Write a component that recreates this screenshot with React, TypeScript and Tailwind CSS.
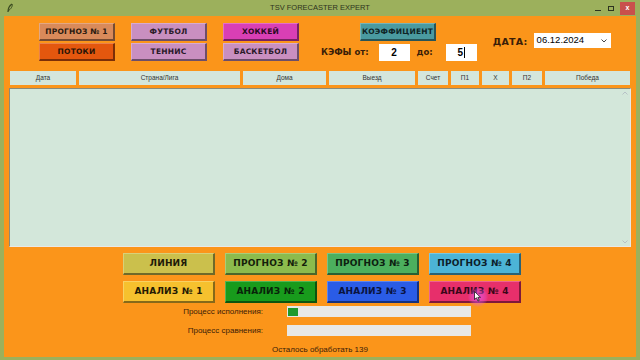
import React from "react";

const btnFont = { fontFamily: '"DejaVu Sans", sans-serif' };

function Btn({ label, cls, w = "w-[76px]", h = "h-[18px]", text = "text-[7.5px]" }: { label: string; cls: string; w?: string; h?: string; text?: string }) {
  return (
    <div
      className={`${w} ${h} ${cls} ${text} flex items-center justify-center font-bold tracking-[0.2px] border-t border-l border-t-white/25 border-l-white/25 border-b-2 border-r-2 border-b-black/45 border-r-black/45`}
      style={btnFont}
    >
      {label}
    </div>
  );
}

const cols: [string, string][] = [
  ["Дата", "w-[66px]"],
  ["Страна/Лига", "w-[161px]"],
  ["Дома", "w-[83px]"],
  ["Выезд", "w-[86px]"],
  ["Счет", "w-[30px]"],
  ["П1", "w-[28px]"],
  ["X", "w-[27px]"],
  ["П2", "w-[30px]"],
  ["Победа", "w-[85px]"],
];

export default function App() {
  return (
    <div className="w-[640px] h-[360px] bg-[#9cb05c] flex flex-col overflow-hidden" style={{ fontFamily: '"Liberation Sans", sans-serif' }}>
      {/* title bar */}
      <div className="h-[16px] flex items-center relative shrink-0">
        <svg width="8" height="10" viewBox="0 0 8 10" className="ml-[6px]">
          <path d="M6 1 C3 3 2 6 2 9" stroke="#3a4a20" strokeWidth="1.3" fill="none" />
          <path d="M6 1 C7 3 5 6 2 8" stroke="#3a4a20" strokeWidth="1" fill="none" />
        </svg>
        <div className="absolute left-0 right-0 top-0 h-[16px] flex items-center justify-center text-[7.5px] text-[#2d3320]" style={{ fontFamily: '"Liberation Sans Narrow", "Liberation Sans", sans-serif' }}>
          TSV FORECASTER EXPERT
        </div>
        <div className="ml-auto flex items-center h-[16px]">
          <div className="w-[6px] h-[1px] bg-[#2d3320] mt-[4px] mr-[7px]" />
          <div className="w-[6px] h-[5px] border border-[#2d3320] mr-[6px]" />
          <div className="w-[15px] h-[13px] bg-[#c9504c] mr-[5px] flex items-center justify-center text-white text-[7px] font-bold">x</div>
        </div>
      </div>

      {/* body */}
      <div className="flex-1 mx-[4px] mb-[3px] bg-[#fb951a] flex flex-col relative">
        {/* top controls */}
        <div className="flex mt-[7px] ml-[35px] h-[38px]">
          <div className="flex flex-col gap-[2px]">
            <Btn label="ПРОГНОЗ № 1" cls="bg-[#d98a5a] text-[#2a1a10]" />
            <Btn label="ПОТОКИ" cls="bg-[#e4570e] text-[#2a1408]" />
          </div>
          <div className="flex flex-col gap-[2px] ml-[16px]">
            <Btn label="ФУТБОЛ" cls="bg-[#c98fc0] text-[#2a1a28]" />
            <Btn label="ТЕННИС" cls="bg-[#c98fc0] text-[#2a1a28]" />
          </div>
          <div className="flex flex-col gap-[2px] ml-[16px]">
            <Btn label="ХОККЕЙ" cls="bg-[#d93fb5] text-[#2a0a22]" />
            <Btn label="БАСКЕТБОЛ" cls="bg-[#c98fc0] text-[#2a1a28]" />
          </div>
          <div className="flex flex-col ml-[22px]">
            <div className="ml-[39px]">
              <Btn label="КОЭФФИЦИЕНТ" cls="bg-[#4a9aa0] text-[#0f2426]" />
            </div>
            <div className="flex items-center mt-[3px] h-[17px]">
              <span className="text-[8.5px] font-bold text-[#3a1e08]" style={btnFont}>КЭФЫ от:</span>
              <div className="ml-[10px] w-[31px] h-[17px] bg-white flex items-center justify-center text-[10px] font-bold text-black">2</div>
              <span className="ml-[7px] text-[8.5px] font-bold text-[#3a1e08]" style={btnFont}>до:</span>
              <div className="ml-[13px] w-[31px] h-[17px] bg-white flex items-center justify-center text-[10px] font-bold text-black">
                5<span className="w-[1px] h-[11px] bg-black ml-[1px]" />
              </div>
            </div>
          </div>
          <div className="flex items-start ml-[16px] mt-[10px]">
            <span className="text-[9.5px] font-bold text-[#3a1e08] tracking-[0.3px] mt-[2px]" style={btnFont}>ДАТА:</span>
            <div className="ml-[6px] w-[77px] h-[15px] bg-white flex items-center pl-[3px] text-[9.5px] text-black">
              06.12.2024
              <svg width="6" height="4" viewBox="0 0 6 4" className="ml-auto mr-[4px]">
                <path d="M0.5 0.5 L3 3 L5.5 0.5" stroke="#444" strokeWidth="1" fill="none" />
              </svg>
            </div>
          </div>
        </div>

        {/* table header */}
        <div className="flex gap-[3px] ml-[6px] mt-[10px] h-[14px]">
          {cols.map(([t, w]) => (
            <div key={t} className={`${w} h-[14px] bg-[#d4e6dc] flex items-center justify-center text-[6.5px] text-[#333]`}>
              {t}
            </div>
          ))}
        </div>

        {/* table body */}
        <div className="ml-[5px] mt-[3px] w-[622px] h-[159px] bg-[#d3e7da] border-t border-l border-[#8a8a7a] border-b border-r border-b-[#e8e8e8] border-r-[#e8e8e8] flex flex-col items-end justify-between py-[2px] pr-[2px]">
          <svg width="6" height="4" viewBox="0 0 6 4"><path d="M0.5 3.5 L3 1 L5.5 3.5" stroke="#b0b8c0" strokeWidth="0.8" fill="none" /></svg>
          <svg width="6" height="4" viewBox="0 0 6 4"><path d="M0.5 0.5 L3 3 L5.5 0.5" stroke="#b0b8c0" strokeWidth="0.8" fill="none" /></svg>
        </div>

        {/* bottom buttons */}
        <div className="flex flex-col gap-[6px] ml-[119px] mt-[6px]">
          <div className="flex gap-[10px]">
            <Btn label="ЛИНИЯ" cls="bg-[#cbc04c] text-[#1e1a08]" w="w-[92px]" h="h-[22px]" text="text-[9px]" />
            <Btn label="ПРОГНОЗ № 2" cls="bg-[#8cbb4d] text-[#14200a]" w="w-[92px]" h="h-[22px]" text="text-[9px]" />
            <Btn label="ПРОГНОЗ № 3" cls="bg-[#4caf5e] text-[#0c2010]" w="w-[92px]" h="h-[22px]" text="text-[9px]" />
            <Btn label="ПРОГНОЗ № 4" cls="bg-[#4cb4d6] text-[#0c1e2a]" w="w-[92px]" h="h-[22px]" text="text-[9px]" />
          </div>
          <div className="flex gap-[10px]">
            <Btn label="АНАЛИЗ № 1" cls="bg-[#f6c12e] text-[#241a04]" w="w-[92px]" h="h-[22px]" text="text-[9px]" />
            <Btn label="АНАЛИЗ № 2" cls="bg-[#189b1c] text-[#08240a]" w="w-[92px]" h="h-[22px]" text="text-[9px]" />
            <Btn label="АНАЛИЗ № 3" cls="bg-[#2a5ce6] text-[#0a1440]" w="w-[92px]" h="h-[22px]" text="text-[9px]" />
            <Btn label="АНАЛИЗ № 4" cls="bg-[#e72f6b] text-[#3a0618]" w="w-[92px]" h="h-[22px]" text="text-[9px]" />
          </div>
        </div>

        {/* progress */}
        <div className="flex items-center mt-[3px] h-[11px]">
          <div className="w-[259px] text-right text-[8px] text-[#3a2008]">Процесс исполнения:</div>
          <div className="ml-[24px] w-[184px] h-[11px] bg-[#e8e8e6] flex items-center pl-[1px]">
            <div className="w-[10px] h-[8px] bg-[#1e9a2c]" />
          </div>
        </div>
        <div className="flex items-center mt-[8px] h-[11px]">
          <div className="w-[259px] text-right text-[8px] text-[#3a2008]">Процесс сравнения:</div>
          <div className="ml-[24px] w-[184px] h-[11px] bg-[#e8e8e6]" />
        </div>
        <div className="mt-[8px] w-[632px] flex justify-center text-[8px] text-[#3a2008]">Осталось обработать 139</div>

        {/* cursor overlay */}
        <div className="absolute left-[464px] top-[271px] w-[20px] h-[20px] rounded-full bg-[radial-gradient(circle,rgba(230,90,240,0.75)_0%,rgba(230,90,240,0.35)_50%,rgba(230,90,240,0)_75%)]" />
        <svg className="absolute left-[470px] top-[275px]" width="8" height="11" viewBox="0 0 8 11">
          <path d="M0.5 0.5 L0.5 8.5 L2.5 6.8 L4 10 L5.2 9.4 L3.8 6.3 L6.5 6.3 Z" fill="white" stroke="black" strokeWidth="0.7" />
        </svg>
      </div>
    </div>
  );
}
